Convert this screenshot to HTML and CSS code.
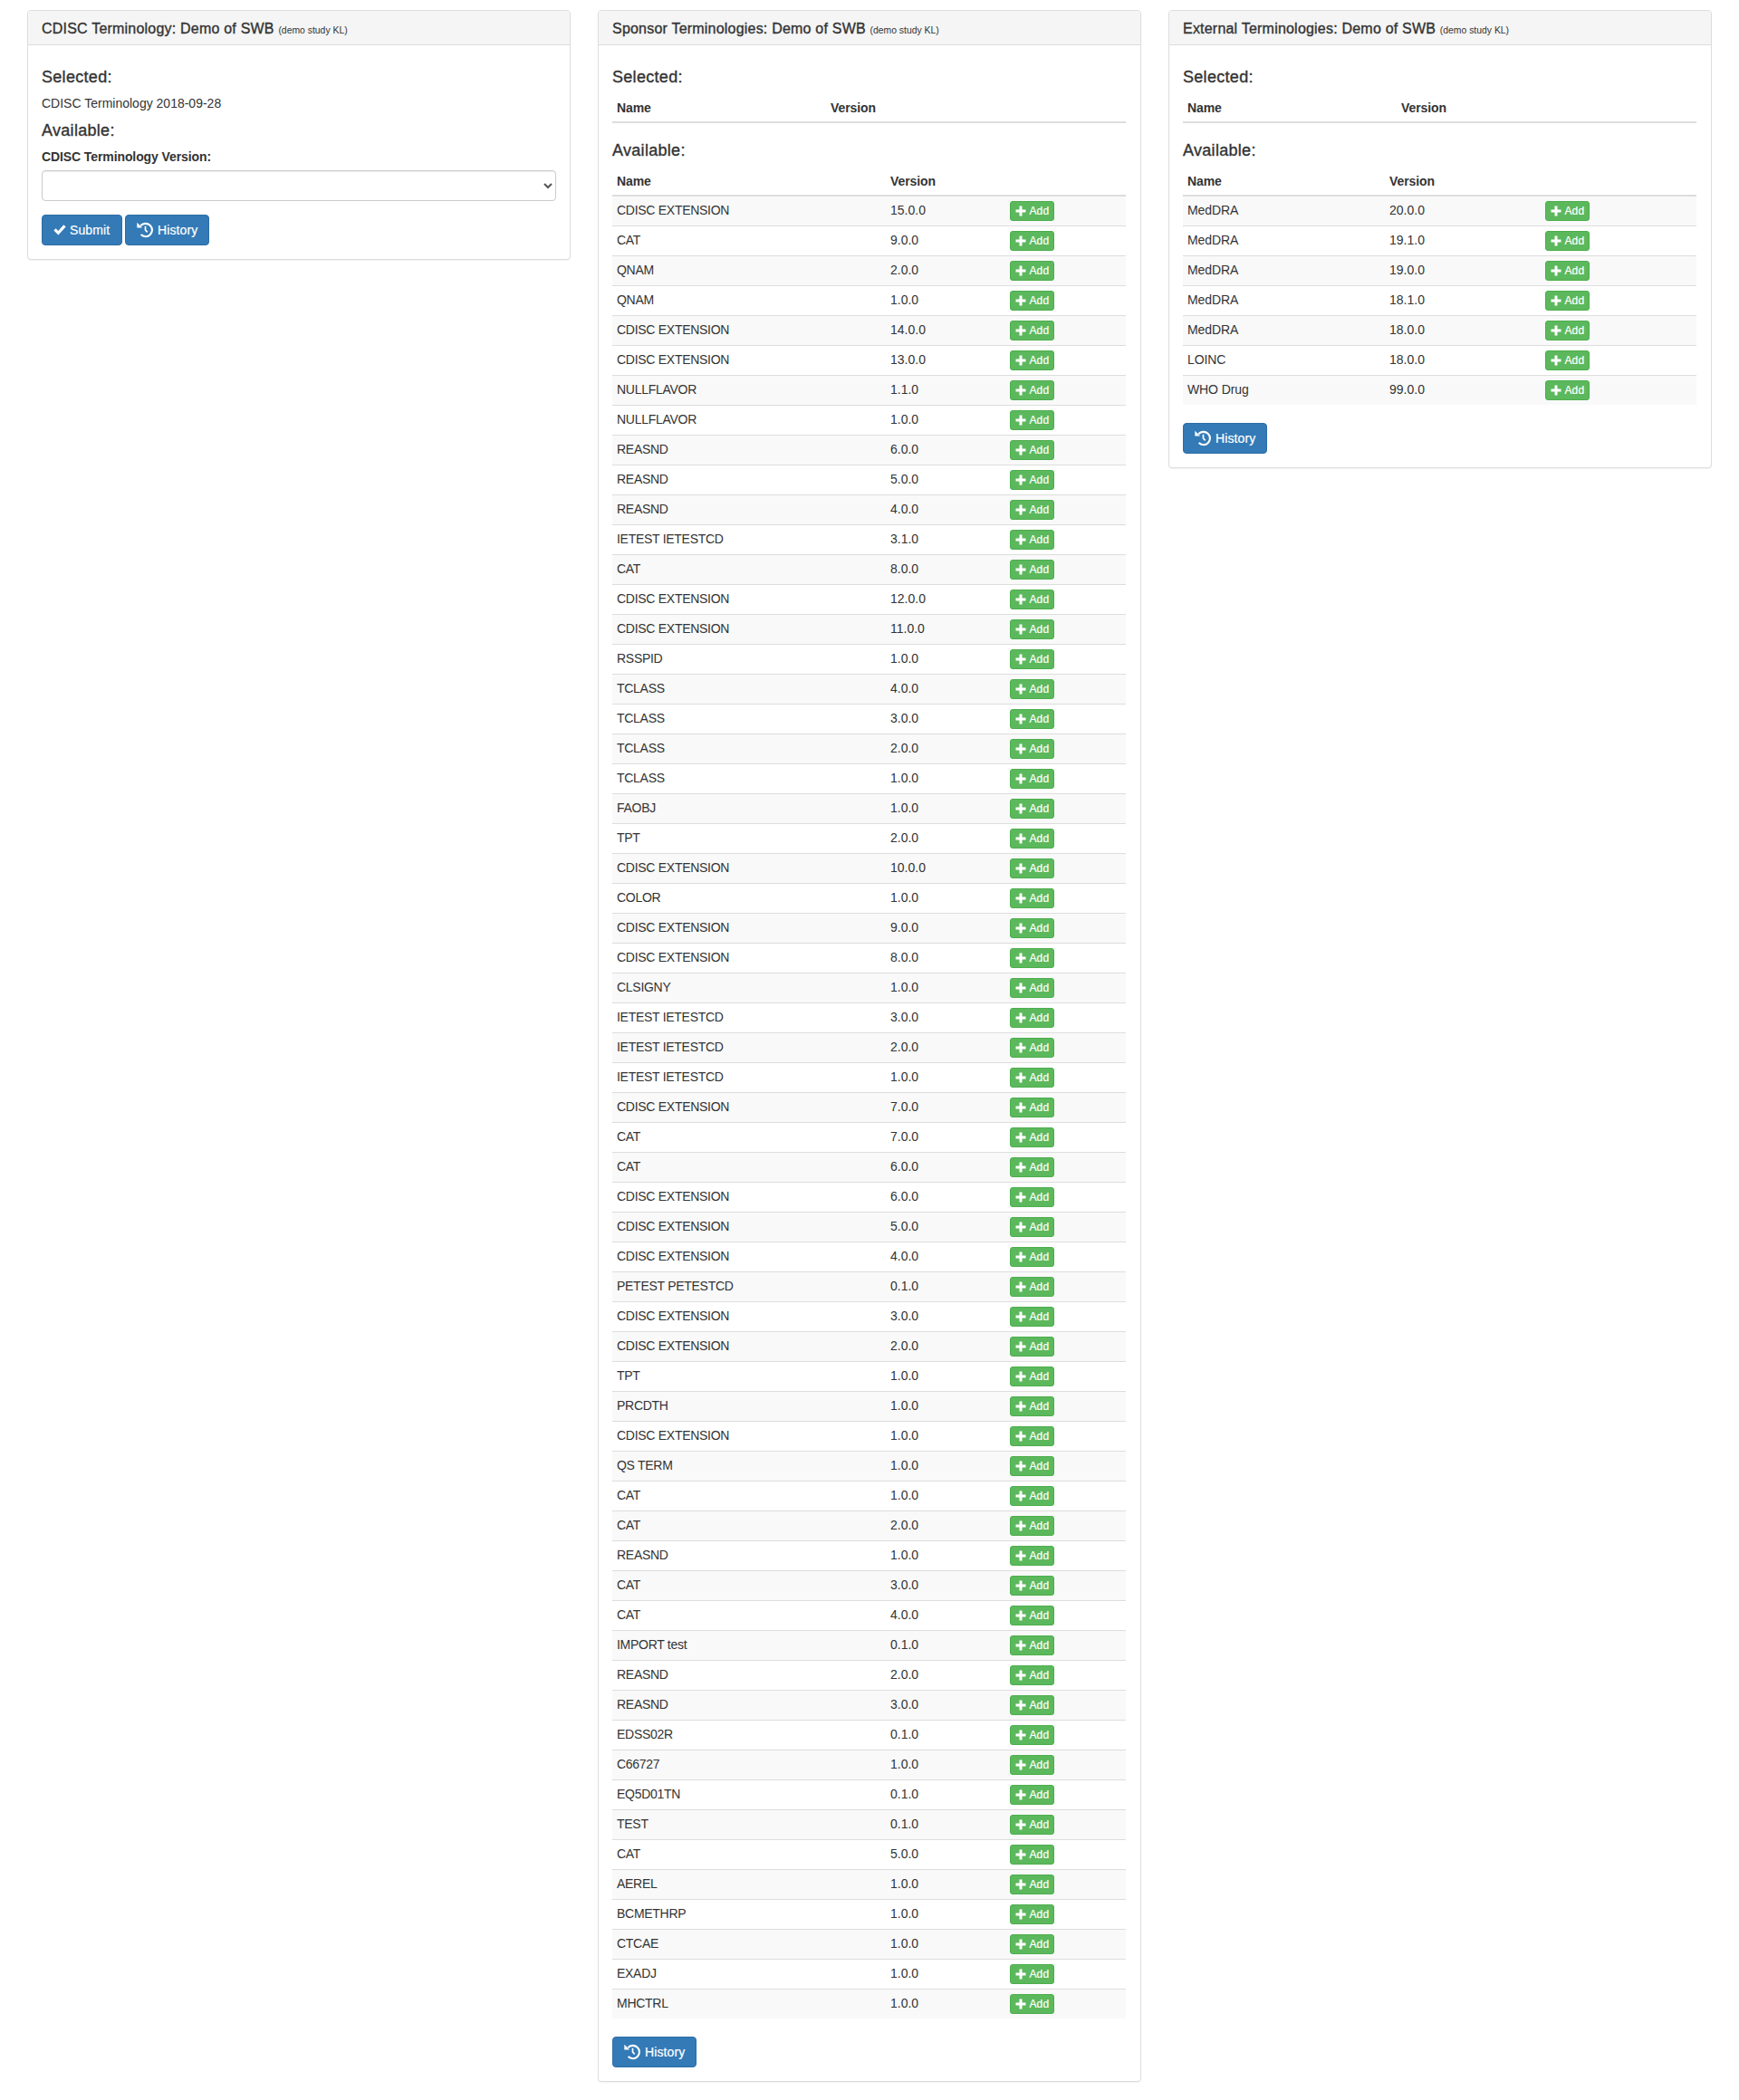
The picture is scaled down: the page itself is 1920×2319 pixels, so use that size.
FILE: index.html
```html
<!DOCTYPE html>
<html lang="en">
<head>
<meta charset="utf-8">
<title>Terminologies</title>
<link rel="stylesheet" href="styles.css">
</head>
<body>
<svg class="sprite" aria-hidden="true">
  <symbol id="icon-history" viewBox="0 0 18 18">
    <path d="M4.3 4.3A7.2 7.2 0 1 1 4.6 14.1" fill="none" stroke="#fff" stroke-width="2.1"/>
    <path d="M0.3 0.8V6.4H6.1Z" fill="#fff"/>
    <path d="M9.5 4.8V9L11.7 11.4" fill="none" stroke="#fff" stroke-width="1.7"/>
  </symbol>
  <symbol id="icon-ok" viewBox="0 0 14 14">
    <path d="M0.4 7.6L2.6 5.3L5.3 7.9L11.3 1.3L13.6 3.4L5.4 12.6Z" fill="#fff"/>
  </symbol>
  <symbol id="icon-plus" viewBox="0 0 12 12">
    <path d="M4.5 0.5h3v4h4v3h-4v4h-3v-4h-4v-3h4z" fill="#fff"/>
  </symbol>
</svg>
<main class="row">
  <section class="panel">
    <header class="panel-heading"><h3 class="panel-title">CDISC Terminology: Demo of SWB <small>(demo study KL)</small></h3></header>
    <div class="panel-body">
      <h4>Selected:</h4>
      <p class="current">CDISC Terminology 2018-09-28</p>
      <h4>Available:</h4>
      <label class="label" for="version">CDISC Terminology Version:</label>
      <select class="form-control" id="version"><option></option></select>
      <div class="actions">
        <button class="btn btn-submit"><svg class="ok"><use href="#icon-ok"/></svg>Submit</button>
        <button class="btn btn-history"><svg class="history"><use href="#icon-history"/></svg>History</button>
      </div>
    </div>
  </section>
  <section class="panel">
    <header class="panel-heading"><h3 class="panel-title">Sponsor Terminologies: Demo of SWB <small>(demo study KL)</small></h3></header>
    <div class="panel-body">
      <h4>Selected:</h4>
      <table class="table selected">
        <thead><tr><th class="name">Name</th><th>Version</th></tr></thead>
      </table>
      <h4>Available:</h4>
      <table class="table sponsor">
        <thead><tr><th class="name">Name</th><th class="version">Version</th><th></th></tr></thead>
        <tbody id="sponsor-rows"></tbody>
      </table>
      <button class="btn btn-history"><svg class="history"><use href="#icon-history"/></svg>History</button>
    </div>
  </section>
  <section class="panel">
    <header class="panel-heading"><h3 class="panel-title">External Terminologies: Demo of SWB <small>(demo study KL)</small></h3></header>
    <div class="panel-body">
      <h4>Selected:</h4>
      <table class="table selected">
        <thead><tr><th class="name">Name</th><th>Version</th></tr></thead>
      </table>
      <h4>Available:</h4>
      <table class="table external">
        <thead><tr><th class="name">Name</th><th class="version">Version</th><th></th></tr></thead>
        <tbody id="external-rows"></tbody>
      </table>
      <button class="btn btn-history"><svg class="history"><use href="#icon-history"/></svg>History</button>
    </div>
  </section>
</main>
<script src="script.js"></script>
</body>
</html>
```
FILE: styles.css
```css
* { box-sizing: border-box; }
body {
  margin: 0;
  padding: 11px 30px 20px;
  background: #fff;
  color: #333;
  font: 14px/20px "Liberation Sans", Arial, sans-serif;
}
.sprite { display: none; }
.row { display: grid; grid-template-columns: repeat(3, 1fr); gap: 30px; align-items: start; }
.panel {
  border: 1px solid #ddd;
  border-radius: 4px;
  background: #fff;
  box-shadow: 0 1px 1px rgba(0, 0, 0, .05);
}
.panel-heading {
  height: 38px;
  padding: 11px 15px 9px;
  border-bottom: 1px solid #ddd;
  border-radius: 3px 3px 0 0;
  background: #f5f5f5;
}
.panel-title {
  margin: 0;
  font-size: 16px;
  font-weight: 500;
  line-height: 17px;
  letter-spacing: .21px;
  -webkit-text-stroke: .35px #333;
}
.panel-title small { font-size: 10.4px; font-weight: 400; line-height: 1; letter-spacing: 0; -webkit-text-stroke: 0; }
.panel-body { padding: 15px; }
h4 {
  margin: 10px 0 9px;
  padding-top: 1px;
  font-size: 18px;
  font-weight: 500;
  line-height: 19px;
  letter-spacing: .3px;
  -webkit-text-stroke: .35px #333;
}
.current { margin: 0; }
.label { display: block; margin-bottom: 5px; font-weight: 700; letter-spacing: -.1px; }
.form-control {
  display: block;
  width: 100%;
  height: 34px;
  padding: 6px 12px;
  border: 1px solid #ccc;
  border-radius: 4px;
  background-color: #fff;
  box-shadow: inset 0 1px 1px rgba(0, 0, 0, .075);
  color: #555;
  font: inherit;
}
.actions { display: flex; gap: 3px; margin-top: 15px; }
.btn {
  display: flex;
  align-items: center;
  height: 34px;
  padding: 0 0 0 12px;
  border: 1px solid #2e6da4;
  border-radius: 4px;
  background: #337ab7;
  color: #fff;
  font: inherit;
  letter-spacing: .1px;
  -webkit-text-stroke: .2px #fff;
}
.btn-submit { width: 89px; }
.btn-history { width: 93px; }
.ok { width: 14px; height: 14px; margin-right: 4px; }
.history { width: 18px; height: 18px; margin-right: 5px; }
.table { width: calc(100% - 1px); margin-bottom: 20px; border-spacing: 0; table-layout: fixed; }
.table th { height: 32px; padding: 5px; border-bottom: 2px solid #ddd; text-align: left; line-height: 20px; letter-spacing: -.1px; }
.table td { height: 33px; padding: 5px; border-top: 1px solid #ddd; vertical-align: top; line-height: 20px; }
.table tbody tr:first-child td { height: 32px; border-top: 0; }
.table tbody tr:nth-child(odd) { background: #f9f9f9; }
.term { letter-spacing: -.28px; }
.external .term { letter-spacing: -.1px; }
.selected .name { width: 236px; }
.sponsor .name { width: 302px; }
.sponsor .version { width: 132px; }
.external .name { width: 223px; }
.external .version { width: 172px; }
.btn-add {
  display: flex;
  align-items: center;
  width: 49px;
  height: 22px;
  padding: 0 0 0 5px;
  border: 1px solid #4cae4c;
  border-radius: 3px;
  background: #5cb85c;
  color: #fff;
  font: 12px/18px "Liberation Sans", Arial, sans-serif;
  letter-spacing: .1px;
  -webkit-text-stroke: .2px #fff;
}
.btn-add svg { width: 12px; height: 12px; margin-right: 3.5px; }
```
FILE: script.js
```js
const sponsor = `CDISC EXTENSION|15.0.0
CAT|9.0.0
QNAM|2.0.0
QNAM|1.0.0
CDISC EXTENSION|14.0.0
CDISC EXTENSION|13.0.0
NULLFLAVOR|1.1.0
NULLFLAVOR|1.0.0
REASND|6.0.0
REASND|5.0.0
REASND|4.0.0
IETEST IETESTCD|3.1.0
CAT|8.0.0
CDISC EXTENSION|12.0.0
CDISC EXTENSION|11.0.0
RSSPID|1.0.0
TCLASS|4.0.0
TCLASS|3.0.0
TCLASS|2.0.0
TCLASS|1.0.0
FAOBJ|1.0.0
TPT|2.0.0
CDISC EXTENSION|10.0.0
COLOR|1.0.0
CDISC EXTENSION|9.0.0
CDISC EXTENSION|8.0.0
CLSIGNY|1.0.0
IETEST IETESTCD|3.0.0
IETEST IETESTCD|2.0.0
IETEST IETESTCD|1.0.0
CDISC EXTENSION|7.0.0
CAT|7.0.0
CAT|6.0.0
CDISC EXTENSION|6.0.0
CDISC EXTENSION|5.0.0
CDISC EXTENSION|4.0.0
PETEST PETESTCD|0.1.0
CDISC EXTENSION|3.0.0
CDISC EXTENSION|2.0.0
TPT|1.0.0
PRCDTH|1.0.0
CDISC EXTENSION|1.0.0
QS TERM|1.0.0
CAT|1.0.0
CAT|2.0.0
REASND|1.0.0
CAT|3.0.0
CAT|4.0.0
IMPORT test|0.1.0
REASND|2.0.0
REASND|3.0.0
EDSS02R|0.1.0
C66727|1.0.0
EQ5D01TN|0.1.0
TEST|0.1.0
CAT|5.0.0
AEREL|1.0.0
BCMETHRP|1.0.0
CTCAE|1.0.0
EXADJ|1.0.0
MHCTRL|1.0.0`;

const external = `MedDRA|20.0.0
MedDRA|19.1.0
MedDRA|19.0.0
MedDRA|18.1.0
MedDRA|18.0.0
LOINC|18.0.0
WHO Drug|99.0.0`;

const addButton = '<button class="btn-add"><svg><use href="#icon-plus"/></svg>Add</button>';

function fill(id, list) {
  document.getElementById(id).innerHTML = list.split('\n').map((line) => {
    const [name, version] = line.split('|');
    return `<tr><td class="term">${name}</td><td>${version}</td><td>${addButton}</td></tr>`;
  }).join('');
}

fill('sponsor-rows', sponsor);
fill('external-rows', external);
```
